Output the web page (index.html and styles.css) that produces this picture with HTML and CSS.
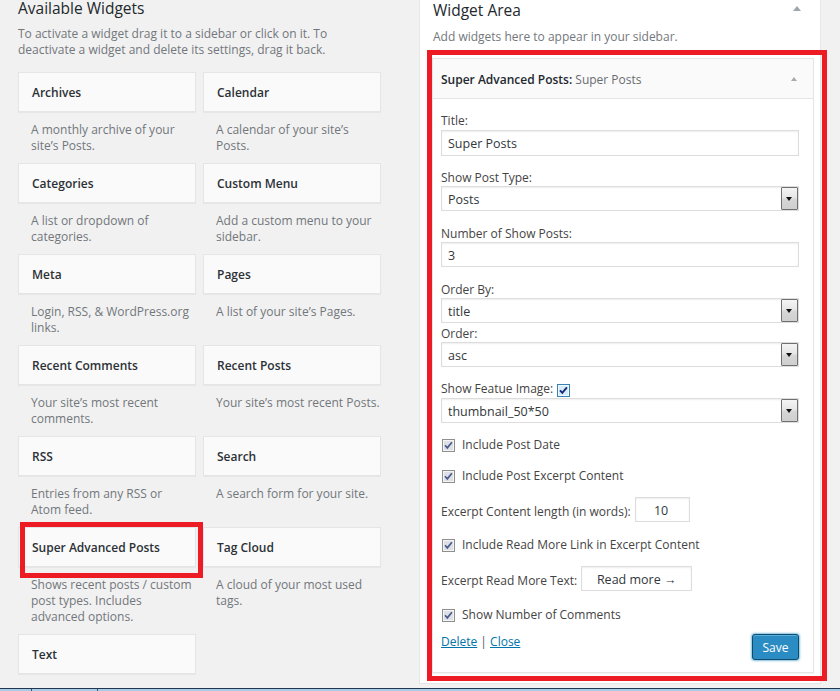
FILE: index.html
```html
<!DOCTYPE html>
<html lang="en">
<head>
<meta charset="utf-8">
<title>Widgets</title>
<link rel="stylesheet" href="styles.css">
</head>
<body>
<div class="page">
  <div class="available">
    <h2 class="avail-title">Available Widgets</h2>
    <p class="avail-desc">To activate a widget drag it to a sidebar or click on it. To<br>deactivate a widget and delete its settings, drag it back.</p>
    <div class="widget-grid">
      <div class="wcell"><div class="wtile">Archives</div><div class="wdesc">A monthly archive of your<br>site’s Posts.</div></div>
      <div class="wcell"><div class="wtile">Calendar</div><div class="wdesc">A calendar of your site’s<br>Posts.</div></div>
      <div class="wcell"><div class="wtile">Categories</div><div class="wdesc">A list or dropdown of<br>categories.</div></div>
      <div class="wcell"><div class="wtile">Custom Menu</div><div class="wdesc">Add a custom menu to your<br>sidebar.</div></div>
      <div class="wcell"><div class="wtile">Meta</div><div class="wdesc">Login, RSS, &amp; WordPress.org<br>links.</div></div>
      <div class="wcell"><div class="wtile">Pages</div><div class="wdesc">A list of your site’s Pages.</div></div>
      <div class="wcell"><div class="wtile">Recent Comments</div><div class="wdesc">Your site’s most recent<br>comments.</div></div>
      <div class="wcell"><div class="wtile">Recent Posts</div><div class="wdesc">Your site’s most recent Posts.</div></div>
      <div class="wcell"><div class="wtile">RSS</div><div class="wdesc">Entries from any RSS or<br>Atom feed.</div></div>
      <div class="wcell"><div class="wtile">Search</div><div class="wdesc">A search form for your site.</div></div>
      <div class="wcell"><div class="wtile">Super Advanced Posts</div><div class="wdesc">Shows recent posts / custom<br>post types. Includes<br>advanced options.</div></div>
      <div class="wcell"><div class="wtile">Tag Cloud</div><div class="wdesc">A cloud of your most used<br>tags.</div></div>
      <div class="wcell"><div class="wtile">Text</div></div>
    </div>
  </div>

  <div class="sidebar">
    <div class="sidebar-head">
      <h2 class="sidebar-title">Widget Area</h2>
      <span class="tri tri-lg"></span>
    </div>
    <p class="sidebar-desc">Add widgets here to appear in your sidebar.</p>

    <div class="widget">
      <div class="widget-top">
        <div class="widget-name"><span class="wn-main">Super Advanced Posts:</span> <span class="wn-sub">Super Posts</span></div>
        <span class="tri tri-sm"></span>
      </div>
      <div class="widget-inside">
        <div class="lbl">Title:</div>
        <div class="field field-title mt2">Super Posts</div>

        <div class="lbl mt13">Show Post Type:</div>
        <div class="field select mt1"><span class="sel-text">Posts</span><span class="sel-btn"></span></div>

        <div class="lbl mt14">Number of Show Posts:</div>
        <div class="field mt1">3</div>

        <div class="lbl mt14">Order By:</div>
        <div class="field select mt1"><span class="sel-text">title</span><span class="sel-btn"></span></div>

        <div class="lbl mt2">Order:</div>
        <div class="field select mt1"><span class="sel-text">asc</span><span class="sel-btn"></span></div>

        <div class="feat-row mt13">
          <span class="lbl">Show Featue Image:</span>
          <svg class="cb cb-hot cb-feat" width="13" height="13" viewBox="0 0 13 13"><rect class="cb-box" x="0.5" y="0.5" width="12" height="12"/><rect class="cb-in" x="2" y="2" width="9" height="9"/><path class="cb-tick" d="M3 6.3 L5.3 8.9 L9.9 3.3"/></svg>
        </div>
        <div class="field select mt1"><span class="sel-text">thumbnail_50*50</span><span class="sel-btn"></span></div>

        <div class="check-row mt13">
          <svg class="cb" width="13" height="13" viewBox="0 0 13 13"><rect class="cb-box" x="0.5" y="0.5" width="12" height="12"/><rect class="cb-in" x="2" y="2" width="9" height="9"/><path class="cb-tick" d="M3 6.3 L5.3 8.9 L9.9 3.3"/></svg>
          <span class="lbl">Include Post Date</span>
        </div>

        <div class="check-row mt15">
          <svg class="cb" width="13" height="13" viewBox="0 0 13 13"><rect class="cb-box" x="0.5" y="0.5" width="12" height="12"/><rect class="cb-in" x="2" y="2" width="9" height="9"/><path class="cb-tick" d="M3 6.3 L5.3 8.9 L9.9 3.3"/></svg>
          <span class="lbl">Include Post Excerpt Content</span>
        </div>

        <div class="inline-row mt14">
          <span class="lbl">Excerpt Content length (in words):</span>
          <div class="field field-num">10</div>
        </div>

        <div class="check-row mt14">
          <svg class="cb" width="13" height="13" viewBox="0 0 13 13"><rect class="cb-box" x="0.5" y="0.5" width="12" height="12"/><rect class="cb-in" x="2" y="2" width="9" height="9"/><path class="cb-tick" d="M3 6.3 L5.3 8.9 L9.9 3.3"/></svg>
          <span class="lbl">Include Read More Link in Excerpt Content</span>
        </div>

        <div class="inline-row mt14">
          <span class="lbl">Excerpt Read More Text:</span>
          <div class="field field-more">Read more →</div>
        </div>

        <div class="check-row mt15">
          <svg class="cb" width="13" height="13" viewBox="0 0 13 13"><rect class="cb-box" x="0.5" y="0.5" width="12" height="12"/><rect class="cb-in" x="2" y="2" width="9" height="9"/><path class="cb-tick" d="M3 6.3 L5.3 8.9 L9.9 3.3"/></svg>
          <span class="lbl">Show Number of Comments</span>
        </div>

        <div class="widget-foot mt11">
          <div class="links"><a href="#">Delete</a> <span class="sep">|</span> <a href="#">Close</a></div>
          <button class="btn-save" type="button">Save</button>
        </div>
      </div>
    </div>
  </div>
</div>

<div class="mark mark-left"></div>
<div class="mark mark-right"></div>
<div class="taskbar"><span class="tb-a"></span><span class="tb-b"></span></div>
</body>
</html>
```

FILE: styles.css
```css
* { box-sizing: border-box; margin: 0; padding: 0; }
html, body { height: 100%; }
body {
  background: #f1f1f1;
  font-family: "Open Sans", "Liberation Sans", sans-serif;
  color: #444;
  overflow: hidden;
  position: relative;
}

.page {
  display: flex;
  align-items: flex-start;
  padding-left: 18px;
}

/* ---------- Available widgets ---------- */
.available { width: 363px; flex: none; }
.avail-title {
  font-size: 15.5px;
  font-weight: 400;
  line-height: 16px;
  color: #23282d;
}
.avail-desc {
  margin-top: 10px;
  font-size: 12px;
  line-height: 16px;
  color: #72777c;
  white-space: nowrap;
}
.widget-grid {
  margin-top: 14px;
  display: grid;
  grid-template-columns: 178px 178px;
  column-gap: 7px;
  align-items: start;
}
.wtile {
  height: 40px;
  padding: 12px 13px 10px;
  border: 1px solid #e5e5e5;
  background: #fafafa;
  box-shadow: 0 1px 1px rgba(0, 0, 0, 0.04);
  font-size: 12px;
  font-weight: 600;
  line-height: 16px;
  color: #2c3136;
  white-space: nowrap;
}
.wdesc {
  padding: 10px 13px 9px;
  font-size: 12px;
  line-height: 16px;
  color: #72777c;
  white-space: nowrap;
}

/* ---------- Sidebar ---------- */
.sidebar {
  width: 402px;
  margin-left: 38px;
  flex: none;
  background: #fff;
  border: 1px solid #e5e5e5;
  border-top: 0;
  padding: 0 6px 10px 12px;
}
.sidebar-head {
  display: flex;
  justify-content: space-between;
  align-items: flex-start;
}
.sidebar-title {
  padding-left: 1px;
  font-size: 15.5px;
  font-weight: 400;
  line-height: 20px;
  color: #23282d;
}
.sidebar-desc {
  margin-top: 8px;
  padding: 1px 0 0 1px;
  margin-bottom: -2px;
  font-size: 12px;
  line-height: 16px;
  color: #72777c;
}

.tri {
  display: block;
  width: 0;
  height: 0;
  border-style: solid;
  border-color: transparent transparent #a0a5aa transparent;
}
.tri-lg {
  margin-top: 6px;
  margin-right: 13px;
  border-width: 0 4px 5px 4px;
}
.tri-sm {
  border-width: 0 3.5px 4.5px 3.5px;
  border-bottom-color: #a7aaad;
}

/* ---------- Widget ---------- */
.widget {
  margin-top: 15px;
  border: 1px solid #e5e5e5;
  background: #fff;
  box-shadow: 0 1px 1px rgba(0, 0, 0, 0.04);
}
.widget-top {
  display: flex;
  justify-content: space-between;
  align-items: center;
  padding: 12px 16px 11px 8px;
  background: #fafafa;
  border-bottom: 1px solid #e5e5e5;
  font-size: 12px;
  line-height: 16px;
}
.widget-name { padding-top: 1px; margin-bottom: -1px; }
.wn-main { font-weight: 600; color: #23282d; }
.wn-sub { font-weight: 400; color: #686c70; }

.widget-inside {
  padding: 13px 14px 12px 8px;
}

.mt1 { margin-top: 1px; }
.mt2 { margin-top: 2px; }
.mt11 { margin-top: 11px; }
.mt13 { margin-top: 13px; }
.mt14 { margin-top: 14px; }
.mt15 { margin-top: 15px; }

.lbl {
  display: block;
  padding-top: 1px;
  margin-bottom: -1px;
  font-size: 12px;
  line-height: 16px;
  color: #444;
  white-space: nowrap;
}

.field {
  height: 25px;
  width: 100%;
  border: 1px solid #ddd;
  box-shadow: inset 0 1px 2px rgba(0, 0, 0, 0.07);
  background: #fff;
  padding: 2px 6px 0;
  font-size: 12.5px;
  line-height: 21px;
  color: #32373c;
  white-space: nowrap;
}
.field-title { height: 26px; line-height: 22px; }

.select {
  display: flex;
  align-items: stretch;
  padding: 0 0 0 6px;
}
.sel-text { flex: 1; padding-top: 2px; line-height: 21px; }
.sel-btn {
  position: relative;
  width: 17px;
  flex: none;
  border: 1px solid #707070;
  border-radius: 1px;
  background: linear-gradient(#f4f4f4 0%, #e6e6e6 45%, #d6d6d6 55%, #cfcfcf 100%);
}
.sel-btn::after {
  content: "";
  position: absolute;
  left: 4px;
  top: 9px;
  border-style: solid;
  border-width: 4px 3.5px 0 3.5px;
  border-color: #111 transparent transparent transparent;
}

/* checkboxes */
.cb { display: block; flex: none; }
.cb-box { fill: #f4f4f4; stroke: #8e8f8f; }
.cb-in { fill: #dde0e4; }
.cb-tick { fill: none; stroke: #4a5c8e; stroke-width: 1.7; }
.cb-hot .cb-box { stroke: #3c7fb1; fill: #eef8fe; }
.cb-hot .cb-in { fill: #d6ecfa; }
.cb-hot .cb-tick { stroke: #18287a; stroke-width: 1.9; }

.check-row {
  display: flex;
  align-items: flex-start;
}
.check-row .cb { margin: 3px 7px 0 1px; }

.feat-row {
  display: flex;
  align-items: flex-start;
}
.cb-feat { margin: 4px 0 0 4px; }

.inline-row {
  display: flex;
  align-items: flex-start;
  gap: 4px;
}
.inline-row .lbl { margin-top: 6px; }
.field-num { width: 55px; text-align: center; padding-right: 8px; }
.field-more { width: 111px; text-align: center; }

.widget-foot {
  display: flex;
  justify-content: space-between;
  align-items: flex-start;
}
.links {
  padding-top: 1px;
  font-size: 12px;
  line-height: 16px;
  color: #555d66;
}
.links a { color: #0073aa; text-decoration: underline; }
.btn-save {
  margin-top: 1px;
  width: 47px;
  height: 26px;
  border: 1px solid #0f4c6f;
  border-radius: 3px;
  background: #2b8cc4;
  box-shadow: 0 0 2px 1px rgba(30, 140, 190, 0.55), inset 0 1px 0 rgba(120, 200, 230, 0.6);
  color: #fff;
  font-family: "Open Sans", "Liberation Sans", sans-serif;
  font-size: 12px;
  line-height: 22px;
  padding: 2px 0 0;
  text-align: center;
}

/* ---------- Annotation overlays ---------- */
.mark {
  position: absolute;
  border: 5px solid #ed1c24;
  pointer-events: none;
}
.mark-left { left: 20px; top: 522px; width: 183px; height: 56px; }
.mark-right { left: 427px; top: 50px; width: 400px; height: 631px; }

.taskbar {
  position: fixed;
  left: 0;
  right: 0;
  bottom: 0;
  height: 3px;
  background: #a9cde9;
  border-top: 1px solid #22364c;
}
.tb-a, .tb-b {
  position: absolute;
  top: 0;
  width: 1px;
  height: 2px;
  background: #3a5570;
}
.tb-a { left: 31px; }
.tb-b { left: 97px; }
```
